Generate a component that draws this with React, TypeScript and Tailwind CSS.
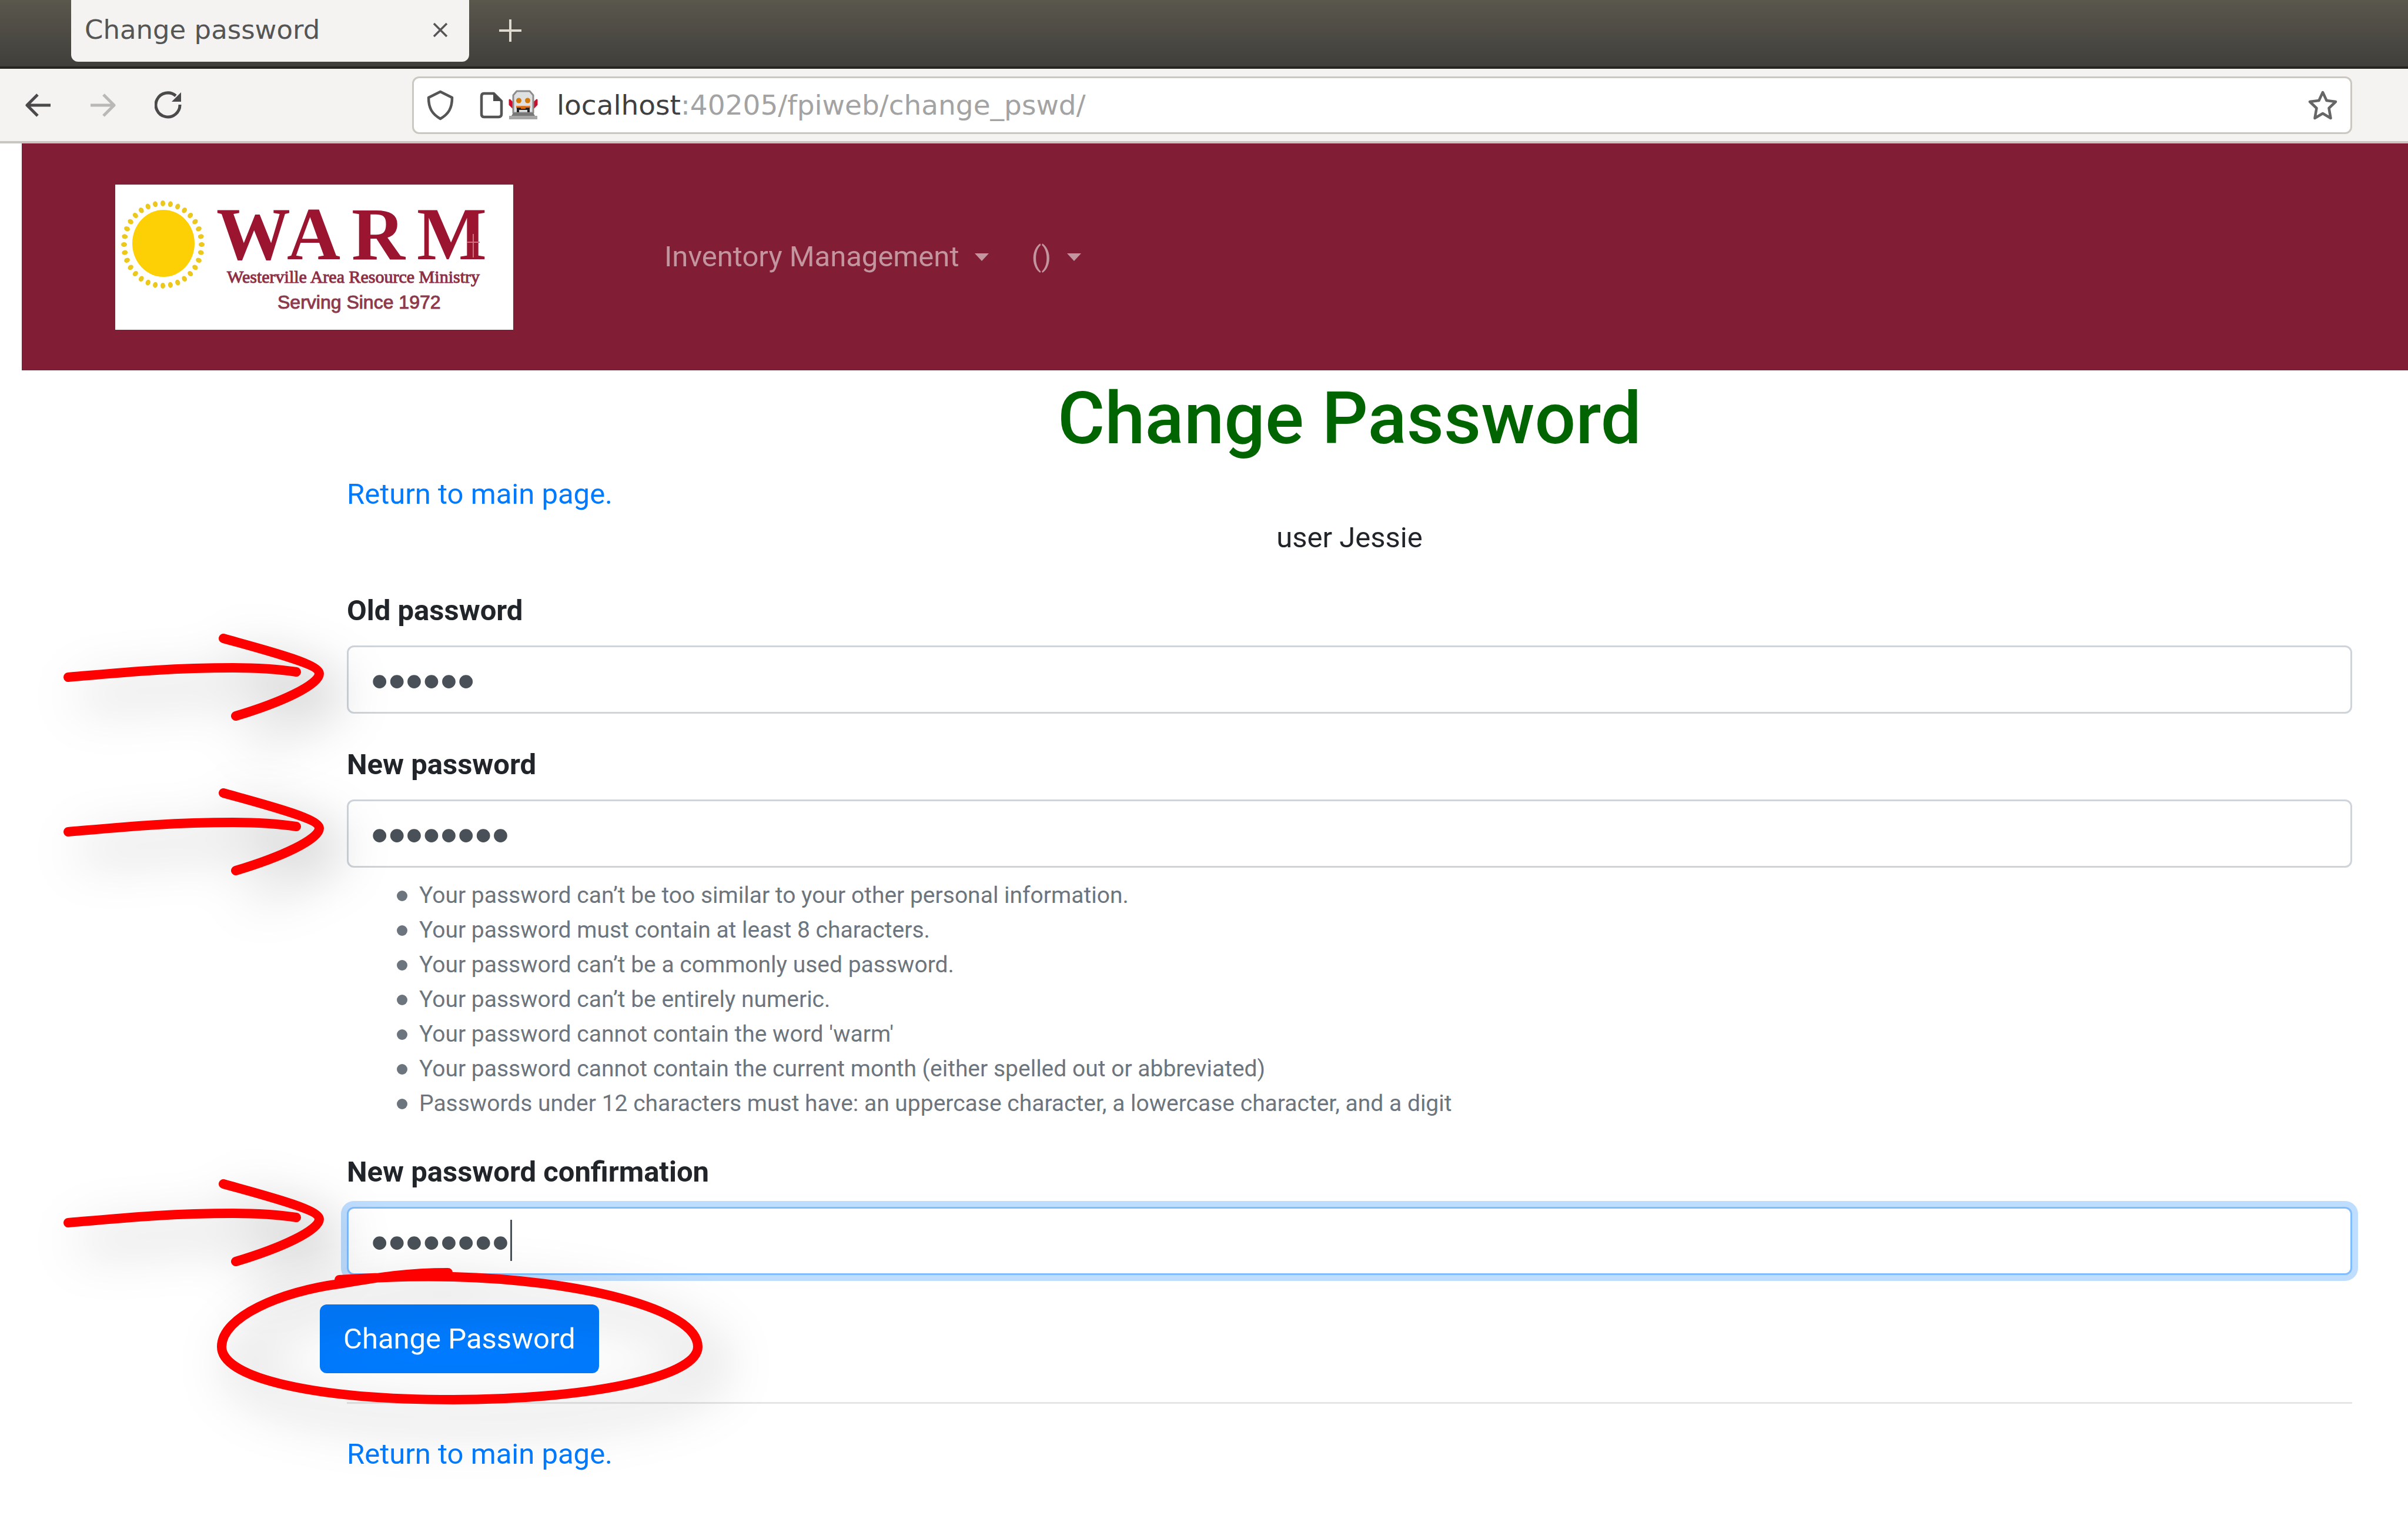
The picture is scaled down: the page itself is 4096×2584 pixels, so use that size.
import React, { useState } from "react";

const FIELD_BASE =
  "block h-[116px] w-full rounded-[12px] border-[3px] bg-white px-[38px] pt-[4px] font-['Liberation_Sans',sans-serif] text-[84px] leading-[106px] text-[#495057] outline-none";

function BackIcon({ className }: { className: string }) {
  return (
    <svg viewBox="0 0 44 40" className={className} fill="none" stroke="currentColor" strokeWidth="5" strokeLinejoin="round" aria-hidden="true">
      <path d="M43 20H3M21 2 3 20l18 18" />
    </svg>
  );
}

function ReloadIcon() {
  return (
    <svg viewBox="0 0 46 48" className="h-[48px] w-[46px]" fill="none" stroke="currentColor" strokeWidth="5" aria-hidden="true">
      <path d="M43 23A20.500 20.500 0 1 1 36 8" />
      <path d="M45 2v16H29Z" fill="currentColor" stroke="none" />
    </svg>
  );
}

function ShieldIcon() {
  return (
    <svg viewBox="0 0 46 52" className="h-[52px] w-[46px]" fill="none" stroke="#555" strokeWidth="4.500" strokeLinejoin="round" aria-hidden="true">
      <path d="M23 3 43 13C43 31 37 41 23 49C9 41 3 31 3 13Z" />
    </svg>
  );
}

function PageIcon() {
  return (
    <svg viewBox="0 0 40 46" className="h-[46px] w-[40px]" fill="none" stroke="#555" strokeWidth="4.500" strokeLinejoin="round" aria-hidden="true">
      <path d="M7 3h17l13 13v22q0 5-5 5H7q-4 0-4-5V8q0-5 4-5Z" />
      <path d="M23 2v14h15Z" fill="#4a4a4a" stroke="none" />
    </svg>
  );
}

function RobotIcon() {
  return (
    <svg viewBox="0 0 52 52" className="h-[52px] w-[52px]" aria-hidden="true">
      <path d="M3 17v8l5 5v-8ZM49 17v8l-5 5v-8Z" fill="#c8102e" stroke="#c8102e" strokeWidth="3" strokeLinejoin="round" />
      <path d="M15 2h22l6 7v30H9V9Z" fill="#dfe0e2" stroke="#8c8c8c" strokeWidth="3" strokeLinejoin="round" />
      <circle cx="18.500" cy="18" r="4.500" fill="#d27a0a" />
      <circle cx="33.500" cy="18" r="4.500" fill="#d27a0a" />
      <path d="M14 27h24v4H14Z" fill="#d9803a" />
      <path d="M15 30h22v8h-4v-4H19v4h-4Z" fill="#222" />
      <path d="M22 28h8v4h-8Z" fill="#d9700a" />
      <path d="M9 39h34l3 5H6Z" fill="#777" />
      <path d="M2 44h48v6H2Z" fill="#a6a6a6" />
    </svg>
  );
}

function StarIcon() {
  return (
    <svg viewBox="0 0 50 50" className="h-[50px] w-[50px]" fill="none" stroke="#666" strokeWidth="4.500" strokeLinejoin="round" aria-hidden="true">
      <path d="M25 3 31.500 17 47 19 35.500 30 38.500 47 25 39 11.500 47 14.500 30 3 19 18.500 17Z" />
    </svg>
  );
}

function WarmLogo() {
  const rays = Array.from({ length: 32 }, (_, i) => (i * Math.PI * 2) / 32);
  return (
    <svg viewBox="0 0 677 247" className="h-[247px] w-[677px] bg-white" role="img" aria-label="WARM, Westerville Area Resource Ministry, Serving Since 1972">
      <ellipse cx="82" cy="100" rx="53" ry="57" fill="#fdd006" />
      {rays.map((a) => (
        <ellipse
          key={a}
          cx={81 + 66 * Math.cos(a)}
          cy={102 + 70 * Math.sin(a)}
          rx="5"
          ry="4"
          fill="#ecc71c"
          transform={`rotate(${(a * 180) / Math.PI} ${81 + 66 * Math.cos(a)} ${102 + 70 * Math.sin(a)})`}
        />
      ))}
      <g fill="#9b1531" className="font-['Liberation_Serif',serif]" fontWeight="700" fontSize="126">
        <text x="172" y="127">W</text>
        <text x="292" y="127">A</text>
        <text x="402" y="127">R</text>
        <text x="513" y="127">M</text>
      </g>
      <path d="M598 98h22M609 84v40" stroke="#d0707f" strokeWidth="2" />
      <text x="190" y="167" fill="#8d2f45" stroke="#8d2f45" strokeWidth="1" className="font-['Liberation_Serif',serif]" fontSize="30">
        Westerville Area Resource Ministry
      </text>
      <text x="276" y="211" fill="#8d3a4c" stroke="#8d3a4c" strokeWidth="1" className="font-['Liberation_Sans',sans-serif]" fontSize="32">
        Serving Since 1972
      </text>
    </svg>
  );
}

function NavMenu({ label }: { label: string }) {
  return (
    <button type="button" aria-haspopup="true" className="flex items-center gap-[27px] text-[49px] leading-[74px] text-[#c3959e]">
      {label}
      <span className="border-x-[12px] border-t-[13px] border-x-transparent border-t-current" />
    </button>
  );
}

function Arrow({ className }: { className: string }) {
  return (
    <svg
      viewBox="0 0 460 150"
      className={`pointer-events-none absolute left-[-482px] h-[150px] w-[460px] overflow-visible drop-shadow-[28px_32px_44px_rgba(0,0,0,0.34)] ${className}`}
      fill="none"
      stroke="#ff0000"
      strokeWidth="16"
      strokeLinecap="round"
      strokeLinejoin="round"
      aria-hidden="true"
    >
      <path d="M8 75C100 67 180 59 289 59Q350 59 396 66" />
      <path d="M272 9C340 28 435 52 435 69C435 88 370 118 293 141" />
    </svg>
  );
}

function CircleMark() {
  return (
    <svg
      viewBox="0 0 830 236"
      className="pointer-events-none absolute left-[-176px] top-[-64px] h-[236px] w-[830px] overflow-visible drop-shadow-[28px_32px_44px_rgba(0,0,0,0.34)]"
      fill="none"
      stroke="#ff0000"
      strokeWidth="16"
      strokeLinecap="round"
      strokeLinejoin="round"
      aria-hidden="true"
    >
      <path d="M209 22C270 18 330 15 403 17C610 22 819 70 819 136C819 190 620 226 403 226C170 226 9 190 9 136C9 85 110 42 209 29C270 19 320 10 394 10" />
    </svg>
  );
}

type FieldProps = {
  id: string;
  label: string;
  initial: string;
  active?: boolean;
  arrow: string;
  children?: React.ReactNode;
};

function PasswordField({ id, label, initial, active, arrow, children }: FieldProps) {
  const [value, setValue] = useState(initial);
  return (
    <div className="mb-[50px]">
      <label htmlFor={id} className="mb-[22px] block text-[49px] font-bold leading-[74px]">
        {label}
      </label>
      <div className="relative">
        <input
          id={id}
          type="password"
          autoComplete="off"
          value={value}
          onChange={(e) => setValue(e.target.value)}
          className={`${FIELD_BASE} ${active ? "border-[#80bdff] shadow-[0_0_0_10px_#bfdeff]" : "border-[#ced4da]"}`}
        />
        {active && <span className="absolute left-[278px] top-[22px] h-[70px] w-[3px] bg-[#495057]" />}
        <Arrow className={arrow} />
      </div>
      {children}
    </div>
  );
}

const RULES = [
  "Your password can’t be too similar to your other personal information.",
  "Your password must contain at least 8 characters.",
  "Your password can’t be a commonly used password.",
  "Your password can’t be entirely numeric.",
  "Your password cannot contain the word 'warm'",
  "Your password cannot contain the current month (either spelled out or abbreviated)",
  "Passwords under 12 characters must have: an uppercase character, a lowercase character, and a digit",
];

export default function App() {
  return (
    <div className="min-h-screen overflow-hidden bg-white font-[Roboto,sans-serif] text-[#212529]">
      <div className="flex h-[117px] items-start border-b-[4px] border-[#262522] bg-linear-to-b from-[#5a574d] to-[#403f3b] pl-[121px] font-['DejaVu_Sans',sans-serif]">
        <div className="flex h-[105px] w-[677px] items-center justify-between rounded-b-[12px] bg-[#f4f3f1] pb-[4px] pl-[23px] pr-[36px] text-[#555]">
          <span className="text-[45px] leading-[60px]">Change password</span>
          <button type="button" aria-label="Close tab">
            <svg viewBox="0 0 26 26" className="h-[26px] w-[26px]" stroke="#555" strokeWidth="3.500" aria-hidden="true">
              <path d="m2 2 22 22M24 2 2 24" />
            </svg>
          </button>
        </div>
        <button type="button" aria-label="New tab" className="ml-[51px] mt-[33px]">
          <svg viewBox="0 0 38 38" className="h-[38px] w-[38px]" stroke="#dfdbd0" strokeWidth="4" aria-hidden="true">
            <path d="M0 19h38M19 0v38" />
          </svg>
        </button>
      </div>

      <div className="flex h-[127px] items-center border-b-[4px] border-[#c9c6c2] bg-[#f4f3f1] pl-[43px] pr-[95px] font-['DejaVu_Sans',sans-serif] text-[#4a4a4a]">
        <button type="button" aria-label="Back">
          <BackIcon className="h-[40px] w-[44px]" />
        </button>
        <button type="button" aria-label="Forward" className="ml-[66px] text-[#b9b8b6]">
          <BackIcon className="h-[40px] w-[44px] rotate-180" />
        </button>
        <button type="button" aria-label="Reload" className="ml-[66px]">
          <ReloadIcon />
        </button>
        <div className="ml-[392px] flex h-[98px] flex-1 items-center rounded-[12px] border-[3px] border-[#cbc8c2] bg-white px-[22px]">
          <ShieldIcon />
          <span className="ml-[44px]">
            <PageIcon />
          </span>
          <span className="ml-[8px]">
            <RobotIcon />
          </span>
          <span className="ml-[31px] flex-1 text-[47px] leading-[60px] text-[#a3a3a3]">
            <span className="text-[#404040]">localhost</span>:40205/fpiweb/change_pswd/
          </span>
          <button type="button" aria-label="Bookmark this page">
            <StarIcon />
          </button>
        </div>
      </div>

      <header className="ml-[37px] flex h-[386px] items-center bg-[#811d34] pl-[159px]">
        <a href="#home">
          <WarmLogo />
        </a>
        <nav className="ml-[257px] flex gap-[72px]">
          <NavMenu label="Inventory Management" />
          <NavMenu label="()" />
        </nav>
      </header>

      <main className="pb-[49px] pl-[590px] pr-[95px] text-[49px] leading-[74px]">
        <h1 className="mb-[18px] pt-[9px] text-center text-[123px] font-medium leading-[147px] text-[#006400]">Change Password</h1>
        <a href="#main" className="block text-[#007bff]">
          Return to main page.
        </a>
        <p className="mb-[50px] text-center">user Jessie</p>
        <form onSubmit={(e) => e.preventDefault()}>
          <PasswordField id="old" label="Old password" initial="secret" arrow="top-[-21px]" />
          <PasswordField id="new1" label="New password" initial="password" arrow="top-[-20px]">
            <ul className="mt-[18px] pl-[85px] text-[39px] leading-[59px] text-[#6c757d]">
              {RULES.map((rule) => (
                <li key={rule} className="flex items-center gap-[20px] before:size-[18px] before:rounded-full before:bg-[#6c757d]">
                  {rule}
                </li>
              ))}
            </ul>
          </PasswordField>
          <PasswordField id="new2" label="New password confirmation" initial="password" active arrow="top-[-48px]" />
          <div className="relative ml-[-46px]">
            <button type="submit" className="block h-[117px] rounded-[12px] bg-[#007bff] px-[40px] text-white">
              Change Password
            </button>
            <CircleMark />
          </div>
        </form>
        <hr className="my-[49px] border-t-[3px] border-[#e5e5e5]" />
        <a href="#main" className="block text-[#007bff]">
          Return to main page.
        </a>
      </main>
    </div>
  );
}
